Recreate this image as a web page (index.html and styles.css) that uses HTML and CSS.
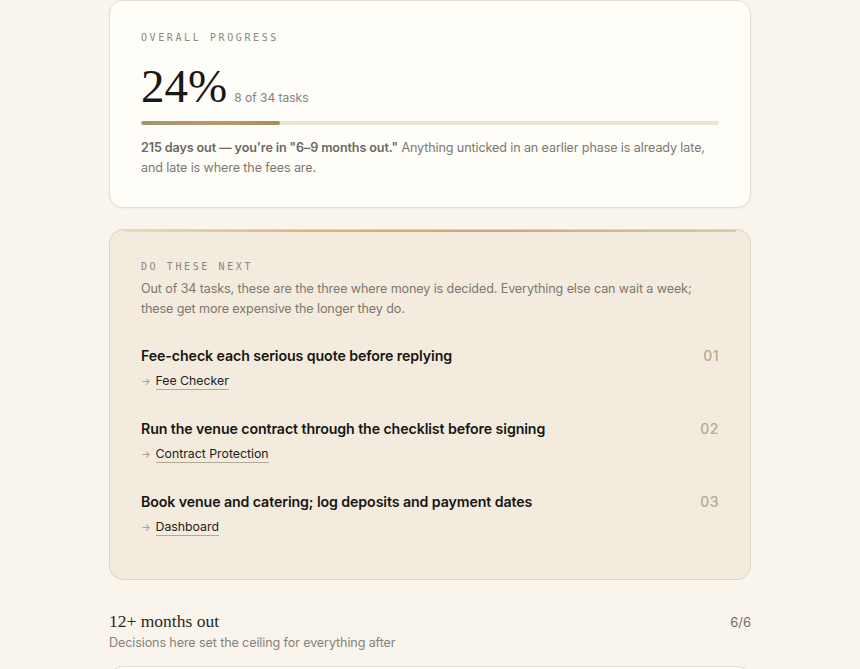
FILE: index.html
```html
<!DOCTYPE html>
<html lang="en">
<head>
<meta charset="utf-8">
<title>Progress</title>
<link rel="stylesheet" href="styles.css">
</head>
<body>
<main class="page">
  <section class="card overall">
    <div class="eyebrow">Overall progress</div>
    <div class="stat-row">
      <span class="stat">24%</span>
      <span class="stat-note">8 of 34 tasks</span>
    </div>
    <div class="bar"><div class="bar-fill" style="width:24%"></div></div>
    <p class="status"><strong>215 days out — you're in "6–9 months out."</strong> Anything unticked in an earlier phase is already late, and late is where the fees are.</p>
  </section>

  <section class="card next">
    <div class="eyebrow">Do these next</div>
    <p class="lede">Out of 34 tasks, these are the three where money is decided. Everything else can wait a week; these get more expensive the longer they do.</p>
    <ol class="tasks">
      <li class="task">
        <div class="task-main">
          <div class="task-title">Fee-check each serious quote before replying</div>
          <div class="task-link"><span class="arrow">→</span><a href="#">Fee Checker</a></div>
        </div>
        <span class="task-num">01</span>
      </li>
      <li class="task">
        <div class="task-main">
          <div class="task-title">Run the venue contract through the checklist before signing</div>
          <div class="task-link"><span class="arrow">→</span><a href="#">Contract Protection</a></div>
        </div>
        <span class="task-num">02</span>
      </li>
      <li class="task">
        <div class="task-main">
          <div class="task-title">Book venue and catering; log deposits and payment dates</div>
          <div class="task-link"><span class="arrow">→</span><a href="#">Dashboard</a></div>
        </div>
        <span class="task-num">03</span>
      </li>
    </ol>
  </section>

  <section class="phase">
    <div class="phase-head">
      <h2 class="phase-title">12+ months out</h2>
      <span class="phase-count">6/6</span>
    </div>
    <p class="phase-sub">Decisions here set the ceiling for everything after</p>
    <div class="card phase-card"></div>
  </section>
</main>
</body>
</html>
```
FILE: styles.css
```css
* { box-sizing: border-box; }
html, body { margin: 0; padding: 0; }
body {
  background: #f9f5ec;
  font-family: Inter, "Noto Sans", "Liberation Sans", sans-serif;
  color: #1d1b18;
  overflow: hidden;
  height: 669px;
}
.page {
  width: 642px;
  margin: 0 auto;
}
.card {
  border: 1px solid #e6dfd0;
  border-radius: 14px;
}
.overall {
  background: #fefdf8;
  padding: 31px 31px 29px;
  box-shadow: 0 1px 2px rgba(120, 100, 60, 0.06);
}
.eyebrow {
  font-family: "DejaVu Sans Mono", "Liberation Mono", monospace;
  font-size: 10px;
  line-height: 12px;
  letter-spacing: 2.6px;
  text-transform: uppercase;
  color: #8c877f;
}
.stat-row {
  display: flex;
  align-items: baseline;
  gap: 7px;
  margin-top: 18px;
  height: 48px;
}
.stat {
  font-family: "Liberation Serif", "DejaVu Serif", serif;
  font-size: 47px;
  line-height: 48px;
  font-weight: 400;
  color: #1a1815;
}
.stat-note {
  font-size: 12px;
  color: #86817a;
}
.bar {
  margin-top: 11px;
  height: 4px;
  border-radius: 2px;
  background: #ebe5d5;
  overflow: hidden;
}
.bar-fill {
  height: 100%;
  border-radius: 2px;
  background: linear-gradient(90deg, #a8926b, #b79b6c 60%, #a68b5e);
}
.status, .lede, .phase-sub {
  font-size: 12.6px;
  letter-spacing: -0.12px;
  line-height: 20px;
  color: #7d7871;
}
.status {
  margin: 13px 0 0;
}
.status strong {
  font-weight: 600;
  color: #6d6861;
}
.next {
  position: relative;
  margin-top: 21px;
  background: #f2ebde;
  border-color: #ddd4c3;
  padding: 31px 31px 42px;
  overflow: hidden;
}
.next::before {
  content: "";
  position: absolute;
  left: 14px;
  right: 14px;
  top: 0;
  height: 2px;
  background: linear-gradient(90deg, rgba(200,175,120,0.25), #d4b878 30%, #c6aa72 60%, rgba(180,160,120,0.45));
}
.lede {
  margin: 6px 0 0;
}
.tasks {
  list-style: none;
  margin: 27px 0 0;
  padding: 0;
  display: flex;
  flex-direction: column;
  gap: 28px;
}
.task {
  display: flex;
  justify-content: space-between;
  align-items: flex-start;
}
.task-title {
  font-size: 14.2px;
  line-height: 20px;
  font-weight: 600;
  color: #171512;
  letter-spacing: -0.1px;
}
.task-link {
  margin-top: 5px;
  display: flex;
  align-items: center;
  gap: 5px;
  font-size: 12.3px;
  line-height: 20px;
}
.arrow {
  font-size: 10px;
  color: #9a948a;
}
.task-link a {
  color: #24211d;
  text-decoration: none;
  border-bottom: 1px solid #b3aa96;
  line-height: 17px;
}
.task-num {
  font-size: 14px;
  line-height: 20px;
  font-weight: 500;
  color: #b6aa8d;
  letter-spacing: 0.5px;
}
.phase {
  margin-top: 29px;
}
.phase-head {
  display: flex;
  justify-content: space-between;
  align-items: baseline;
}
.phase-title {
  margin: 0;
  font-family: "Liberation Serif", "DejaVu Serif", serif;
  font-weight: 400;
  font-size: 17.5px;
  line-height: 24px;
  color: #2a2722;
}
.phase-count {
  font-size: 13px;
  color: #6f6a63;
}
.phase-sub {
  margin: 0;
  color: #86817a;
}
.phase-card {
  margin-top: 13px;
  height: 60px;
  background: #fefdf8;
}
```
